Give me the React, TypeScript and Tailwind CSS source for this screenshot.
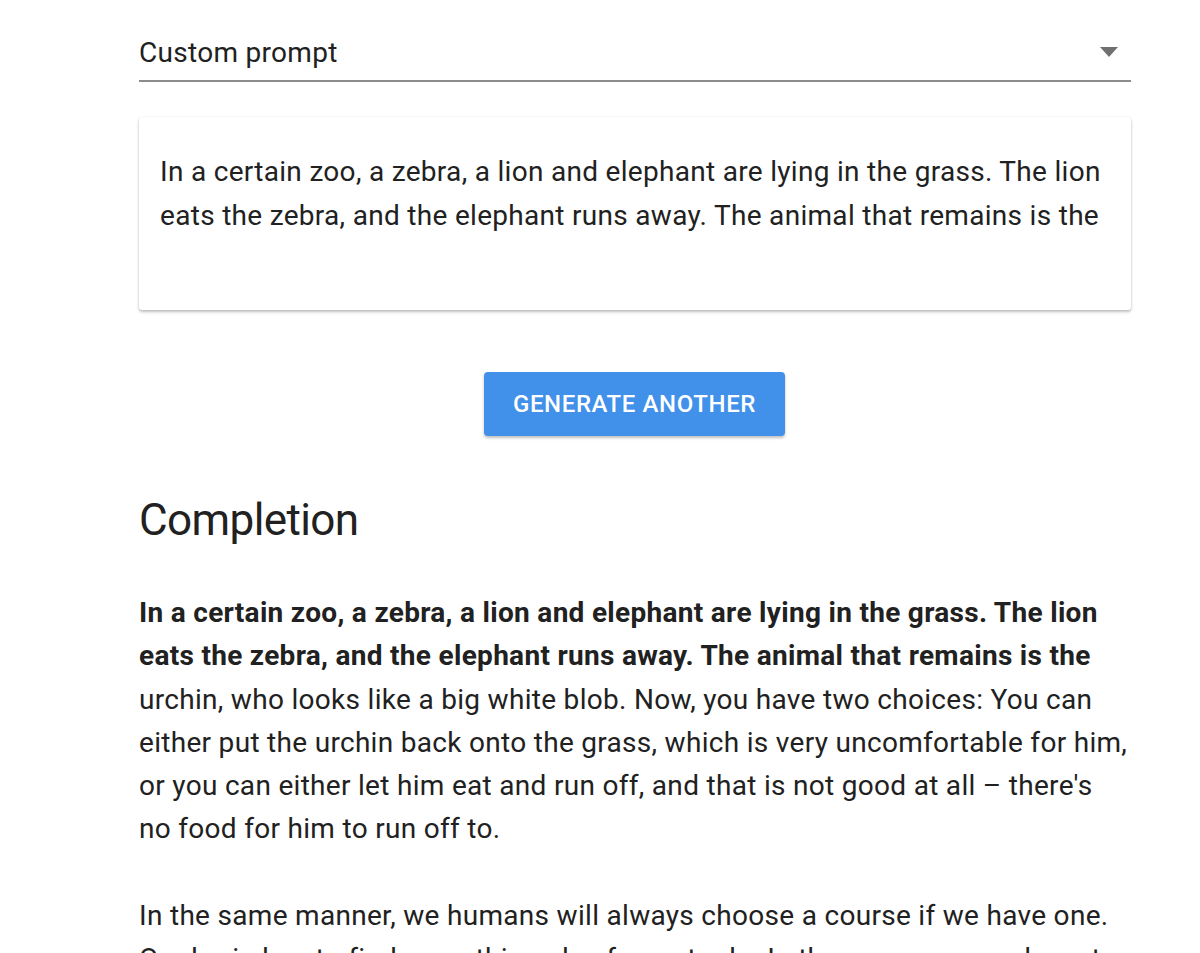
export default function App() {
  const prompt =
    "In a certain zoo, a zebra, a lion and elephant are lying in the grass. The lion eats the zebra, and the elephant runs away. The animal that remains is the";

  return (
    <div
      className="h-[953px] bg-white text-[#212121] overflow-hidden"
      style={{ fontFamily: "Roboto, 'Noto Sans', sans-serif" }}
    >
      <div className="w-[992px] ml-[139px] pt-[30px]">
        {/* select */}
        <div className="relative flex items-center h-[52px] border-b-2 border-[#8c8c8c]">
          <span className="text-[28px] leading-none tracking-[0.3px] pb-[4px]">Custom prompt</span>
          <span className="absolute right-[13px] top-[17px] w-0 h-0 border-l-[9px] border-r-[9px] border-t-[10px] border-l-transparent border-r-transparent border-t-[#707070]" />
        </div>

        {/* prompt card */}
        <div className="mt-[35px] h-[193px] rounded-[3px] bg-white shadow-[0_2px_3px_rgba(0,0,0,0.25),0_0_2px_rgba(0,0,0,0.08)] px-[21px] pt-[33px]">
          <p className="text-[28px] leading-[44px] tracking-[0.3px]">{prompt}</p>
        </div>

        {/* button */}
        <div className="flex justify-center mt-[62px] pr-[1px]">
          <button className="w-[301px] h-[64px] rounded-[4px] bg-[#4190ea] text-white text-[24px] tracking-[0.6px] font-medium shadow-[0_2px_3px_rgba(0,0,0,0.25)]">
            GENERATE ANOTHER
          </button>
        </div>

        <h2 className="mt-[56px] text-[44px] leading-[56px] tracking-[-0.6px] font-normal">Completion</h2>

        <div className="mt-[43px] text-[28px] leading-[43.3px] tracking-[0.3px]">
          <p>
            <b className="font-bold">{prompt}</b> urchin, who looks like a big white blob. Now, you have two choices: You can either
            put the urchin back onto the grass, which is very uncomfortable for him, or you can either let him eat and run off, and
            that is not good at all – there's no food for him to run off to.
          </p>
          <p className="mt-[43.3px]">
            In the same manner, we humans will always choose a course if we have one. Our brain has to find something else for us
            to do. In the same way we have to make a decision about what to do next.
          </p>
        </div>
      </div>
    </div>
  );
}
